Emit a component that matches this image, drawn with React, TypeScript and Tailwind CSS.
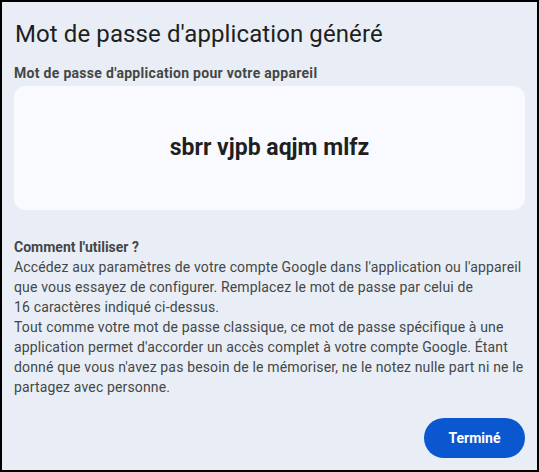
import React from "react";

export default function App() {
  return (
    <div className="w-[539px] h-[472px] border-2 border-black bg-[#e9eef6] px-3 flex flex-col text-[#1f1f1f]" style={{ fontFamily: "Roboto, 'Open Sans', Arial, sans-serif" }}>
      <h1 className="mt-[17px] text-[24px] leading-[30px] font-normal text-[#1f1f1f] pl-[1px] tracking-[0.1px]">Mot de passe d'application généré</h1>
      <div className="mt-[15px] text-[14px] leading-[18px] font-bold text-[#444746] tracking-[0.3px]">Mot de passe d'application pour votre appareil</div>
      <div className="mt-[4px] h-[124px] rounded-xl bg-[#f8faff] flex items-center justify-center">
        <span className="text-[23px] font-bold text-[#1f1f1f]">sbrr vjpb aqjm mlfz</span>
      </div>
      <div className="mt-[27px] text-[14px] leading-[20px] text-[#444746] tracking-[0.15px]">
        <div className="font-bold tracking-normal">Comment l'utiliser ?</div>
        <div>Accédez aux paramètres de votre compte Google dans l'application ou l'appareil</div>
        <div>que vous essayez de configurer. Remplacez le mot de passe par celui de</div>
        <div>16 caractères indiqué ci-dessus.</div>
        <div>Tout comme votre mot de passe classique, ce mot de passe spécifique à une</div>
        <div>application permet d'accorder un accès complet à votre compte Google. Étant</div>
        <div>donné que vous n'avez pas besoin de le mémoriser, ne le notez nulle part ni ne le</div>
        <div>partagez avec personne.</div>
      </div>
      <div className="flex justify-end mt-auto mb-[12px]">
        <button className="h-[40px] w-[101px] rounded-full bg-[#0b57d0] text-white text-[14px] font-bold">Terminé</button>
      </div>
    </div>
  );
}
